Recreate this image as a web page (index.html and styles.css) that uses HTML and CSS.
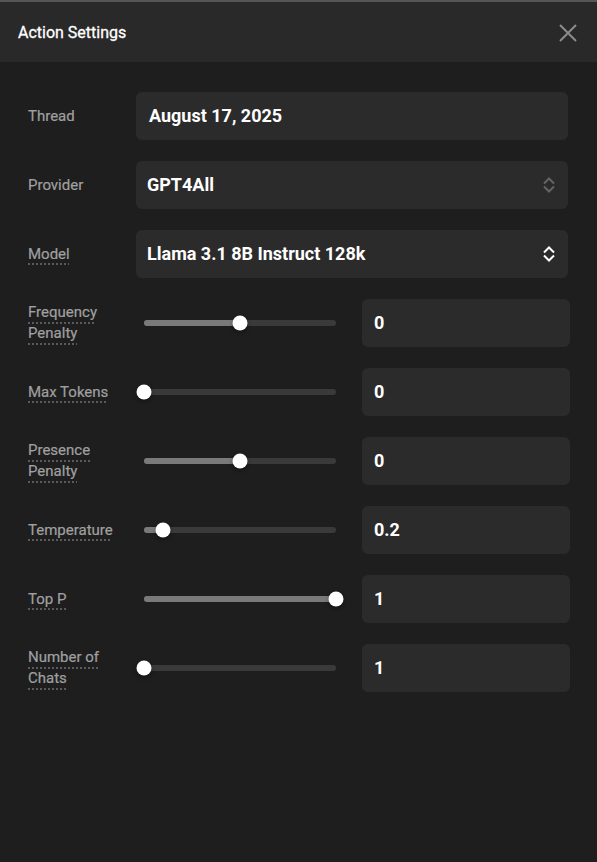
FILE: index.html
```html
<!DOCTYPE html>
<html>
<head>
<meta charset="utf-8">
<link rel="stylesheet" href="styles.css">
</head>
<body>
<div class="dialog">
  <header class="header">
    <h1 class="title">Action Settings</h1>
    <button class="close" aria-label="Close">
      <svg width="18" height="18" viewBox="0 0 18 18"><path d="M1 1L17 17M17 1L1 17" stroke="#8c8c8c" stroke-width="2" fill="none"/></svg>
    </button>
  </header>
  <main class="body">
    <div class="row">
      <span class="label">Thread</span>
      <div class="field field-text">August 17, 2025</div>
    </div>
    <div class="row">
      <span class="label">Provider</span>
      <div class="field field-select disabled">
        <span>GPT4All</span>
        <svg class="chev" width="14" height="18" viewBox="0 0 14 18"><path d="M2 7.5L7 2.5L12 7.5M2 10.5L7 15.5L12 10.5" stroke="currentColor" stroke-width="2" fill="none"/></svg>
      </div>
    </div>
    <div class="row">
      <span class="label"><span class="u">Model</span></span>
      <div class="field field-select">
        <span>Llama 3.1 8B Instruct 128k</span>
        <svg class="chev" width="14" height="18" viewBox="0 0 14 18"><path d="M2 7.5L7 2.5L12 7.5M2 10.5L7 15.5L12 10.5" stroke="currentColor" stroke-width="2" fill="none"/></svg>
      </div>
    </div>

    <div class="row slider-row">
      <span class="label"><span class="u">Frequency Penalty</span></span>
      <div class="slider"><div class="track"><div class="fill" style="width:50%"></div><div class="thumb" style="left:50%"></div></div></div>
      <div class="field field-num">0</div>
    </div>
    <div class="row slider-row">
      <span class="label"><span class="u">Max Tokens</span></span>
      <div class="slider"><div class="track"><div class="fill" style="width:0%"></div><div class="thumb" style="left:0%"></div></div></div>
      <div class="field field-num">0</div>
    </div>
    <div class="row slider-row">
      <span class="label"><span class="u">Presence Penalty</span></span>
      <div class="slider"><div class="track"><div class="fill" style="width:50%"></div><div class="thumb" style="left:50%"></div></div></div>
      <div class="field field-num">0</div>
    </div>
    <div class="row slider-row">
      <span class="label"><span class="u">Temperature</span></span>
      <div class="slider"><div class="track"><div class="fill" style="width:10%"></div><div class="thumb" style="left:10%"></div></div></div>
      <div class="field field-num">0.2</div>
    </div>
    <div class="row slider-row">
      <span class="label"><span class="u">Top P</span></span>
      <div class="slider"><div class="track"><div class="fill" style="width:100%"></div><div class="thumb" style="left:100%"></div></div></div>
      <div class="field field-num">1</div>
    </div>
    <div class="row slider-row">
      <span class="label"><span class="u">Number of Chats</span></span>
      <div class="slider"><div class="track"><div class="fill" style="width:0%"></div><div class="thumb" style="left:0%"></div></div></div>
      <div class="field field-num">1</div>
    </div>
  </main>
</div>
</body>
</html>
```
FILE: styles.css
```css
* { box-sizing: border-box; }
html, body { margin: 0; padding: 0; }
body {
  background: #1e1e1e;
  font-family: Roboto, "Liberation Sans", sans-serif;
  color: #fff;
  width: 597px;
  height: 862px;
  overflow: hidden;
}
.dialog {
  border-top: 2px solid #555;
  height: 100%;
  background: #1e1e1e;
}
.header {
  height: 60px;
  background: #292929;
  display: flex;
  align-items: center;
  justify-content: space-between;
  padding: 0 19px 0 18px;
}
.title {
  margin: 0;
  font-size: 16px;
  font-weight: 400;
  color: #fff;
  -webkit-text-stroke: 0.3px #fff;
}
.close {
  background: none;
  border: 0;
  padding: 0;
  width: 20px;
  height: 20px;
  display: flex;
  align-items: center;
  justify-content: center;
  margin-top: 2px;
}
.body {
  padding: 30px 27px 0 28px;
  display: flex;
  flex-direction: column;
  gap: 21px;
}
.row {
  display: flex;
  align-items: center;
  height: 48px;
}
.label {
  width: 108px;
  flex: none;
  padding-right: 8px;
  font-size: 15px;
  line-height: 21px;
  color: #a0a0a0;
  -webkit-text-stroke: 0.2px #a0a0a0;
}
.u {
  text-decoration: underline dotted #5a5a5a;
  text-decoration-thickness: 2px;
  text-underline-offset: 5px;
}
.field {
  height: 48px;
  background: #2b2b2b;
  border-radius: 6px;
  display: flex;
  align-items: center;
  font-size: 18px;
  font-weight: 700;
  color: #fff;
  padding-bottom: 1px;
}
.field-text {
  flex: 1;
  margin-right: 2px;
  padding-left: 13px;
}
.field-select {
  flex: 1;
  margin-right: 2px;
  padding: 0 12px 1px 11px;
  justify-content: space-between;
}
.chev { color: #fff; }
.disabled .chev { color: #646464; }
.slider {
  width: 208px;
  flex: none;
  padding: 0 8px;
  margin-right: 18px;
}
.track {
  position: relative;
  height: 6px;
  border-radius: 3px;
  background: #3a3a3a;
}
.fill {
  height: 100%;
  border-radius: 3px;
  background: #7a7a7a;
}
.thumb {
  position: absolute;
  top: 50%;
  width: 15px;
  height: 15px;
  border-radius: 50%;
  background: #fff;
  transform: translate(-50%, -50%);
  box-shadow: 0 2px 4px rgba(0,0,0,0.35);
}
.field-num {
  flex: 1;
  padding-left: 12px;
}
```
